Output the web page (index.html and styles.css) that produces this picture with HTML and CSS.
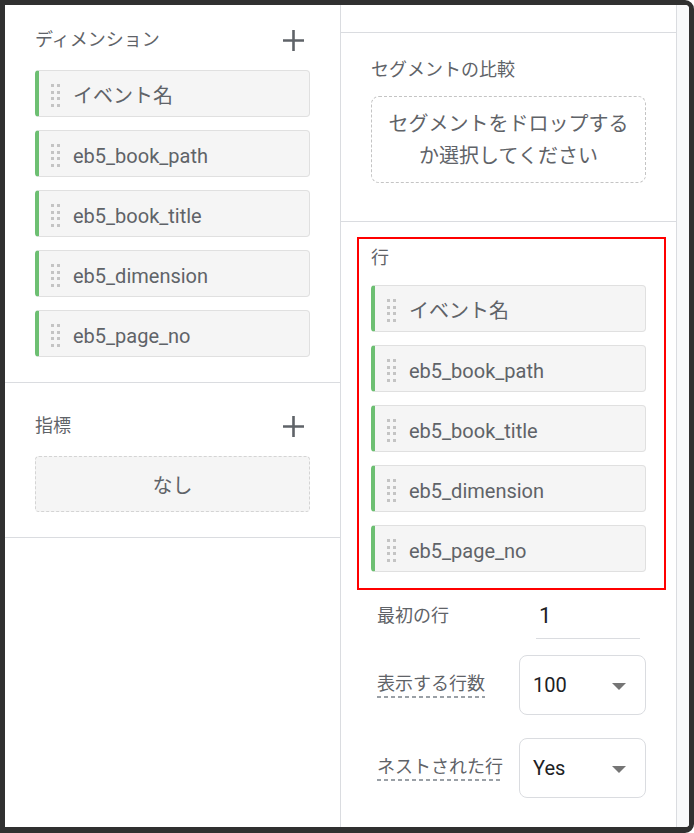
FILE: index.html
```html
<!DOCTYPE html>
<html lang="ja">
<head>
<meta charset="utf-8">
<title>Explore settings</title>
<link rel="stylesheet" href="styles.css">
</head>
<body>
<div class="frame">
  <div class="panel panel-left">
    <section class="sec sec-dims">
      <div class="sec-head">
        <span class="title">ディメンション</span>
        <button class="add" type="button" aria-label="追加">
          <svg width="21" height="21" viewBox="0 0 21 21"><path d="M10.5 0V21M0 10.5H21" stroke="#5f6368" stroke-width="2.6" fill="none"/></svg>
        </button>
      </div>
      <div class="chips">
        <div class="chip"><span class="handle"></span><span class="chip-text">イベント名</span></div>
        <div class="chip"><span class="handle"></span><span class="chip-text">eb5_book_path</span></div>
        <div class="chip"><span class="handle"></span><span class="chip-text">eb5_book_title</span></div>
        <div class="chip"><span class="handle"></span><span class="chip-text">eb5_dimension</span></div>
        <div class="chip"><span class="handle"></span><span class="chip-text">eb5_page_no</span></div>
      </div>
    </section>
    <section class="sec sec-metrics">
      <div class="sec-head">
        <span class="title">指標</span>
        <button class="add" type="button" aria-label="追加">
          <svg width="21" height="21" viewBox="0 0 21 21"><path d="M10.5 0V21M0 10.5H21" stroke="#5f6368" stroke-width="2.6" fill="none"/></svg>
        </button>
      </div>
      <div class="empty">なし</div>
    </section>
  </div>

  <div class="panel panel-right">
    <div class="top-strip"></div>
    <section class="segment">
      <div class="label">セグメントの比較</div>
      <div class="drop">セグメントをドロップする<br>か選択してください</div>
    </section>
    <section class="rows">
      <div class="highlight">
        <div class="label label-rows">行</div>
        <div class="chips">
          <div class="chip"><span class="handle"></span><span class="chip-text">イベント名</span></div>
          <div class="chip"><span class="handle"></span><span class="chip-text">eb5_book_path</span></div>
          <div class="chip"><span class="handle"></span><span class="chip-text">eb5_book_title</span></div>
          <div class="chip"><span class="handle"></span><span class="chip-text">eb5_dimension</span></div>
          <div class="chip"><span class="handle"></span><span class="chip-text">eb5_page_no</span></div>
        </div>
      </div>
      <div class="options">
        <div class="opt opt-first">
          <span class="opt-label plain">最初の行</span>
          <div class="num-input">1</div>
        </div>
        <div class="opt opt-count">
          <span class="opt-label dashed">表示する行数</span>
          <div class="select"><span>100</span><span class="caret"></span></div>
        </div>
        <div class="opt opt-nested">
          <span class="opt-label dashed">ネストされた行</span>
          <div class="select"><span>Yes</span><span class="caret"></span></div>
        </div>
      </div>
    </section>
  </div>

  <div class="scrollbar"></div>
</div>
</body>
</html>
```

FILE: styles.css
```css
* { box-sizing: border-box; }

html, body {
  margin: 0;
  padding: 0;
  background: #ffffff;
}

body {
  font-family: Roboto, "Noto Sans CJK JP", sans-serif;
  color: #5f6368;
}

.frame {
  width: 694px;
  height: 833px;
  display: flex;
  border-style: solid;
  border-color: #303030;
  border-width: 5px 5px 6px 5px;
  border-radius: 0 9px 9px 0;
  background: #ffffff;
  overflow: hidden;
}

.panel-left {
  width: 336px;
  flex: none;
  border-right: 1px solid #dadce0;
}

.panel-right {
  flex: 1;
  min-width: 0;
}

.scrollbar {
  width: 13px;
  flex: none;
  background: #f8f9fa;
  border-left: 1px solid #dadce0;
}

/* sections */
.sec {
  border-bottom: 1px solid #dadce0;
  padding-left: 30px;
  padding-right: 30px;
}

.sec-dims {
  padding-top: 18px;
  padding-bottom: 25px;
}

.sec-metrics {
  padding-top: 26px;
  padding-bottom: 25px;
}

.sec-head {
  height: 34px;
  display: flex;
  align-items: center;
  justify-content: space-between;
  margin-bottom: 13px;
}

.title {
  font-size: 18px;
  line-height: 24px;
  color: #5f6368;
}

.add {
  width: 34px;
  height: 34px;
  padding: 0;
  border: 0;
  background: transparent;
  display: flex;
  align-items: center;
  justify-content: center;
}

.add svg { display: block; }

/* chips */
.chips {
  display: flex;
  flex-direction: column;
  gap: 13px;
}

.chip {
  height: 47px;
  display: flex;
  align-items: center;
  padding-left: 12px;
  background: #f5f5f5;
  border: 1px solid #e0e0e0;
  border-left: 4px solid #6dbf72;
  border-radius: 4px;
}

.handle {
  width: 9px;
  height: 23px;
  margin-top: 4px;
  flex: none;
}

.handle::before {
  content: "";
  display: block;
  width: 3px;
  height: 3px;
  background: #c4c4c4;
  box-shadow:
    6px 0 #c4c4c4,
    0 7px #c4c4c4, 6px 7px #c4c4c4,
    0 13px #c4c4c4, 6px 13px #c4c4c4,
    0 20px #c4c4c4, 6px 20px #c4c4c4;
}

.chip-text {
  margin-left: 13px;
  padding-top: 4px;
  font-size: 20px;
  line-height: 24px;
  color: #5f6368;
  white-space: nowrap;
}

.empty {
  height: 56px;
  display: flex;
  align-items: center;
  justify-content: center;
  background: #f5f5f5;
  border: 1px dashed #d4d4d4;
  border-radius: 4px;
  font-size: 20px;
  color: #5f6368;
}

/* right panel */
.top-strip {
  height: 28px;
  border-bottom: 1px solid #dadce0;
}

.segment {
  padding: 25px 30px 38px;
  border-bottom: 1px solid #dadce0;
}

.label {
  font-size: 18px;
  line-height: 24px;
  color: #5f6368;
}

.segment .label {
  margin-bottom: 14px;
}

.drop {
  height: 87px;
  display: flex;
  align-items: center;
  justify-content: center;
  text-align: center;
  padding: 0 12px;
  border: 1px dashed #c4c4c4;
  border-radius: 8px;
  font-size: 20px;
  line-height: 32px;
  color: #5f6368;
}

.highlight {
  margin: 15px 10px 0 16px;
  border: 2px solid #ff0000;
  padding: 7px 18px 16px 12px;
}

.label-rows {
  margin-bottom: 15px;
}

.options {
  padding: 0 30px 0 36px;
}

.opt {
  display: grid;
  grid-template-columns: 142px 1fr;
  align-items: center;
}

.opt-first {
  margin-top: 7px;
}

.opt-count {
  margin-top: 16px;
}

.opt-nested {
  margin-top: 23px;
}

.opt-label {
  justify-self: start;
  font-size: 18px;
  line-height: 24px;
  color: #5f6368;
  white-space: nowrap;
}

.opt-label.plain {
  margin-bottom: 4px;
}

.opt-label.dashed {
  padding-bottom: 2px;
  background-image: repeating-linear-gradient(to right, #9aa0a6 0 4px, transparent 4px 7px);
  background-size: 100% 2px;
  background-position: left bottom;
  background-repeat: no-repeat;
}

.num-input {
  height: 42px;
  margin: 0 6px 0 17px;
  padding: 0 0 4px 3px;
  border-bottom: 1px solid #dadce0;
  font-size: 22px;
  line-height: 37px;
  color: #202124;
}

.select {
  height: 60px;
  display: flex;
  align-items: center;
  justify-content: space-between;
  padding: 0 19px 0 13px;
  border: 1px solid #dadce0;
  border-radius: 8px;
  font-size: 20px;
  color: #202124;
}

.caret {
  width: 0;
  height: 0;
  border-left: 7px solid transparent;
  border-right: 7px solid transparent;
  border-top: 7px solid #757575;
  margin-top: 2px;
}
```
